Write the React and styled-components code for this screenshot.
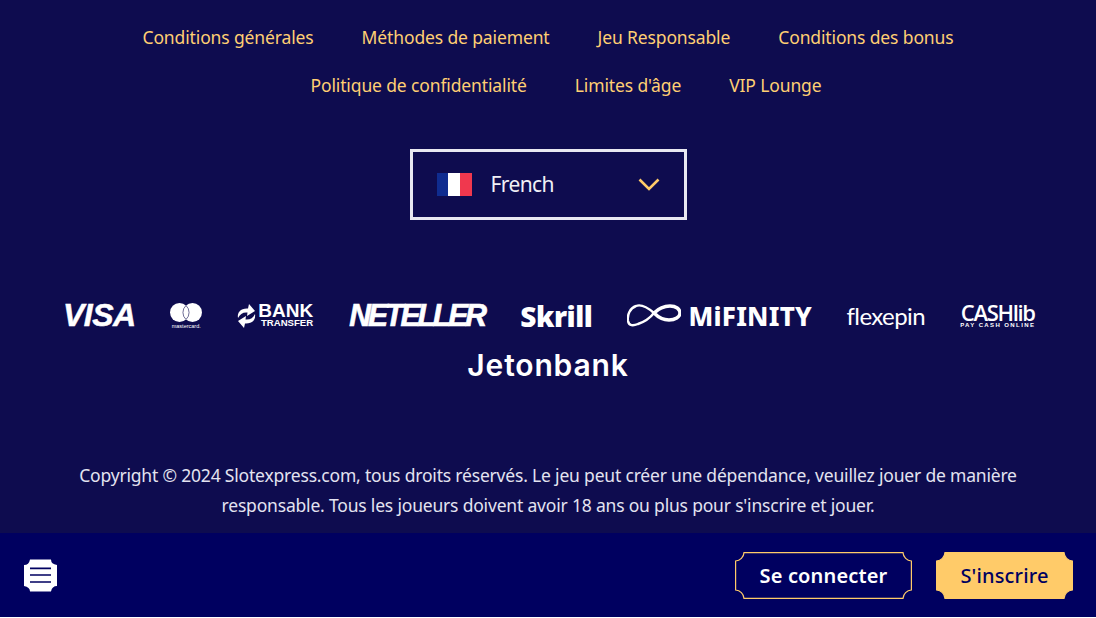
import React from 'react';
import styled, { createGlobalStyle } from 'styled-components';

const GlobalStyle = createGlobalStyle`
  html, body {
    margin: 0;
    background: #fff;
    font-family: "Noto Sans", "Open Sans", sans-serif;
  }
`;

const Footer = styled.footer`
  background: #0e0c4f;
  padding: 13px 40px 13px;
  display: flex;
  flex-direction: column;
  align-items: center;
`;

const Nav = styled.nav`
  display: flex;
  flex-wrap: wrap;
  justify-content: center;
  column-gap: 48px;
  width: 900px;
`;

const NavLink = styled.a`
  color: #ffcf73;
  font-size: 17.5px;
  line-height: 48px;
  letter-spacing: -0.13px;
  text-decoration: none;
  white-space: nowrap;
  margin-left: ${p => p.$ml || 0}px;
`;

const LangSelect = styled.div`
  box-sizing: border-box;
  width: 277px;
  height: 71px;
  margin-top: 40px;
  border: 3px solid #e8e8f1;
  display: flex;
  align-items: center;
  padding: 0 24px;
`;

const Flag = styled.div`
  width: 35px;
  height: 23px;
  display: flex;
  flex-shrink: 0;
  margin-right: 19px;
`;

const Stripe = styled.span`
  flex: 1;
  background: ${p => p.$color};
`;

const LangName = styled.span`
  color: #f0f0f6;
  font-size: 21px;
  letter-spacing: -0.6px;
  line-height: 28px;
  flex: 1;
  position: relative;
  top: -1px;
`;

const Logos = styled.div`
  display: flex;
  flex-wrap: wrap;
  justify-content: center;
  column-gap: 35.5px;
  width: 1000px;
  margin-top: 71px;
`;

const Logo = styled.div`
  width: ${p => p.$w}px;
  height: 49px;
  margin-left: ${p => p.$ml || 0}px;
  display: flex;
  align-items: center;
  justify-content: center;
  color: #fff;
  white-space: nowrap;
`;

const Visa = styled.span`
  font: italic 700 32px "Liberation Sans", sans-serif;
  letter-spacing: -0.6px;
  -webkit-text-stroke: 0.5px #fff;
`;

const McWrap = styled.div`
  display: flex;
  flex-direction: column;
  align-items: center;
`;

const McText = styled.span`
  font: 400 5.5px "Liberation Sans", sans-serif;
  line-height: 6px;
  margin-top: 1px;
`;

const BankWrap = styled.div`
  display: flex;
  align-items: center;
  gap: 2px;
`;

const BankText = styled.div`
  display: flex;
  flex-direction: column;
  align-items: flex-end;
  font-family: "Liberation Sans", sans-serif;
  font-weight: 700;
`;

const BankBig = styled.span`
  font-size: 19px;
  line-height: 14px;
`;

const BankSmall = styled.span`
  font-size: 9.6px;
  line-height: 10px;
`;

const Neteller = styled.span`
  display: inline-block;
  font: italic 700 32px "Liberation Sans", sans-serif;
  letter-spacing: -3.2px;
  -webkit-text-stroke: 0.7px #fff;
  transform: scaleX(0.94);
`;

const Skrill = styled.span`
  font: 800 28px "Open Sans", sans-serif;
  letter-spacing: -0.5px;
`;

const MifinityWrap = styled.div`
  display: flex;
  align-items: center;
  gap: 8px;
`;

const Mifinity = styled.span`
  font: 800 26px "Noto Sans", sans-serif;
  letter-spacing: 0.2px;
`;

const Flexepin = styled.span`
  font: 400 24px "Lato", sans-serif;
  letter-spacing: -0.6px;
`;

const CashWrap = styled.div`
  display: flex;
  flex-direction: column;
  align-items: center;
`;

const CashName = styled.span`
  font: 600 22px "Open Sans", sans-serif;
  line-height: 19px;
  letter-spacing: -1.3px;
`;

const CashTag = styled.span`
  font: 700 6px "Liberation Sans", sans-serif;
  line-height: 7px;
  letter-spacing: 1.4px;
`;

const Jetonbank = styled.span`
  font: 600 30px "Inter", sans-serif;
  letter-spacing: 0.85px;
`;

const Copyright = styled.p`
  margin: 71px 0 0;
  width: 980px;
  color: #e3e3f0;
  font-size: 17.5px;
  line-height: 30px;
  letter-spacing: -0.19px;
  text-align: center;
`;

const BottomBar = styled.div`
  height: 84px;
  background: #000060;
  display: flex;
  align-items: center;
  padding: 0 23px 0 24px;
`;

const MenuButton = styled.button`
  width: 33px;
  height: 33px;
  padding: 0;
  border: 0;
  background: none;
  display: block;
  margin-right: auto;
`;

const Ticket = styled.button`
  position: relative;
  width: ${p => p.$w}px;
  height: 47px;
  padding: 0;
  border: 0;
  background: none;
  color: ${p => (p.$filled ? '#000060' : '#fff')};
  font: ${p => (p.$filled ? 500 : 600)} 20px "Noto Sans", sans-serif;
  letter-spacing: 0.15px;
  margin-left: ${p => p.$ml || 0}px;
`;

const TicketShape = styled.svg`
  position: absolute;
  inset: 0;
`;

const TicketLabel = styled.span`
  position: relative;
`;

const ticketPath = (w, h, r, o) =>
  `M${r} ${o} H${w - r} A${r} ${r} 0 0 0 ${w - o} ${r} V${h - r} A${r} ${r} 0 0 0 ${w - r} ${h - o} H${r} A${r} ${r} 0 0 0 ${o} ${h - r} V${r} A${r} ${r} 0 0 0 ${r} ${o} Z`;

const TicketButton = ({ w, filled, ml, children }) => (
  <Ticket $w={w} $filled={filled} $ml={ml}>
    <TicketShape width={w} height={47}>
      <path
        d={ticketPath(w, 47, 9, 0.6)}
        fill={filled ? '#ffcb69' : 'none'}
        stroke="#ffcb69"
        strokeWidth="1.2"
      />
    </TicketShape>
    <TicketLabel>{children}</TicketLabel>
  </Ticket>
);

const navRows = [
  { label: 'Conditions générales' },
  { label: 'Méthodes de paiement' },
  { label: 'Jeu Responsable' },
  { label: 'Conditions des bonus' },
  { label: 'Politique de confidentialité', ml: 36 },
  { label: "Limites d'âge" },
  { label: 'VIP Lounge' },
];

export default function App() {
  return (
    <>
      <GlobalStyle />
      <Footer>
        <Nav>
          {navRows.map(item => (
            <NavLink key={item.label} href="#" $ml={item.ml}>{item.label}</NavLink>
          ))}
        </Nav>

        <LangSelect>
          <Flag>
            <Stripe $color="#0f2c8f" />
            <Stripe $color="#ffffff" />
            <Stripe $color="#f0384e" />
          </Flag>
          <LangName>French</LangName>
          <svg width="22" height="13" viewBox="0 0 22 13" fill="none">
            <path d="M1.500 1.500L11 11L20.500 1.500" stroke="#ffcb69" strokeWidth="2.6" />
          </svg>
        </LangSelect>

        <Logos>
          <Logo $w={71} $ml={3}><Visa>VISA</Visa></Logo>
          <Logo $w={32}>
            <McWrap>
              <svg width="32" height="19" viewBox="0 0 32 19">
                <circle cx="9.500" cy="9.500" r="9.500" fill="#fff" />
                <circle cx="22.500" cy="9.500" r="9.500" fill="#fff" />
                <path d="M16 2.500a9.500 9.500 0 0 1 0 14a9.500 9.500 0 0 1 0-14Z" fill="#fff" stroke="#0e0c4f" strokeWidth="0.6" />
              </svg>
              <McText>mastercard.</McText>
            </McWrap>
          </Logo>
          <Logo $w={75}>
            <BankWrap>
              <svg width="19" height="24" viewBox="0 0 19 24" fill="#fff">
                <path d="M1 14C0 8 4 4 11 4.500L12 0l6 7-8 5 .5-3.500C6 8 3 10 1 14Z" />
                <path d="M18 10c1 6-3 10-10 9.500L7 24 1 17l8-5-.5 3.500C13 16 16 14 18 10Z" />
              </svg>
              <BankText>
                <BankBig>BANK</BankBig>
                <BankSmall>TRANSFER</BankSmall>
              </BankText>
            </BankWrap>
          </Logo>
          <Logo $w={137}><Neteller>NETELLER</Neteller></Logo>
          <Logo $w={71}><Skrill>Skrill</Skrill></Logo>
          <Logo $w={184}>
            <MifinityWrap>
              <svg width="54" height="23" viewBox="0 0 54 23" fill="none" stroke="#fff">
                <path d="M27 9C20 3 14 0 9 2 3 4 0 11 1 17c1 5 5 5 10 3 6-2 12-6 16-11Z" strokeWidth="2.4" />
                <path d="M27 9c5-5 10-7 16-7 6 0 10 3 10 7s-5 7-11 7c-6 0-11-3-15-7Z" strokeWidth="3.4" />
              </svg>
              <Mifinity>MiFINITY</Mifinity>
            </MifinityWrap>
          </Logo>
          <Logo $w={78}><Flexepin>flexepin</Flexepin></Logo>
          <Logo $w={75}>
            <CashWrap>
              <CashName>CASHlib</CashName>
              <CashTag>PAY CASH ONLINE</CashTag>
            </CashWrap>
          </Logo>
          <Logo $w={162}><Jetonbank>Jetonbank</Jetonbank></Logo>
        </Logos>

        <Copyright>
          Copyright © 2024 Slotexpress.com, tous droits réservés. Le jeu peut créer une dépendance, veuillez jouer de manière responsable. Tous les joueurs doivent avoir 18 ans ou plus pour s'inscrire et jouer.
        </Copyright>
      </Footer>

      <BottomBar>
        <MenuButton aria-label="Menu">
          <svg width="33" height="33" viewBox="0 0 33 33">
            <path d="M6 0.500H27Q27 5 33 6V27Q28 27 27 32.500H6Q6 28 0 27V6Q5 6 6 0.500Z" fill="#fff" />
            <path d="M6 9.300H27M6 16H27M6 23H27" stroke="#000060" strokeWidth="1.7" />
          </svg>
        </MenuButton>
        <TicketButton w={177}>Se connecter</TicketButton>
        <TicketButton w={137} ml={24} filled>S'inscrire</TicketButton>
      </BottomBar>
    </>
  );
}
